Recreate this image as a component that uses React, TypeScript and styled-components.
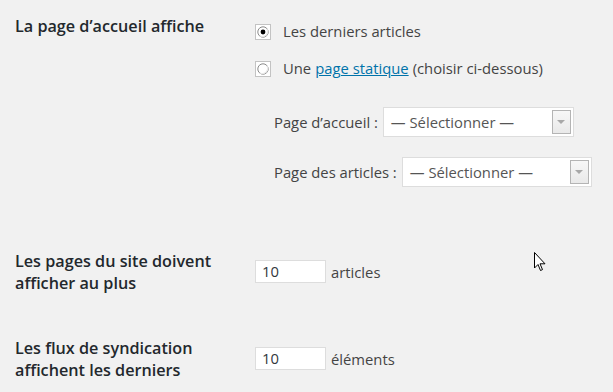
import React from "react";
import styled, { createGlobalStyle } from "styled-components";

const Global = createGlobalStyle`
  html, body { margin: 0; padding: 0; background: #f1f1f1; }
  body { font-family: "Open Sans", "Liberation Sans", sans-serif; font-size: 14.8px; color: #444; }
`;

const Page = styled.div`
  width: 613px;
  height: 392px;
  position: relative;
  overflow: hidden;
  padding-left: 15px;
  box-sizing: border-box;
`;

const Row = styled.div<{ $top: number }>`
  display: grid;
  grid-template-columns: 240px 1fr;
  padding-top: ${(p) => p.$top}px;
`;

const Label = styled.div<{ $lh: number }>`
  font-weight: 600;
  color: #23282d;
  font-size: 16.2px;
  line-height: ${(p) => p.$lh}px;
  width: 225px;
`;

const Controls = styled.div<{ $top: number }>`
  padding-top: ${(p) => p.$top}px;
  display: flex;
  flex-direction: column;
`;

const RadioLine = styled.label<{ $gap: number }>`
  display: flex;
  align-items: center;
  height: 21px;
  line-height: 21px;
  margin-bottom: ${(p) => p.$gap}px;
  white-space: nowrap;
`;

const RadioBox = styled.span`
  width: 14px;
  height: 14px;
  border: 1px solid #c3c3c3;
  background: #fff;
  display: inline-flex;
  align-items: center;
  justify-content: center;
  margin-right: 12px;
  flex: none;
`;

const Link = styled.a`
  color: #0073aa;
  text-decoration: underline;
  margin: 0 4px;
`;

const SelectList = styled.div`
  padding-left: 19px;
  display: flex;
  flex-direction: column;
  gap: 20px;
  margin-top: 28px;
`;

const SelectRow = styled.div`
  display: flex;
  align-items: center;
  white-space: nowrap;
`;

const SelectBox = styled.div<{ $w: number }>`
  width: ${(p) => p.$w}px;
  height: 30px;
  box-sizing: border-box;
  border: 1px solid #dddddd;
  background: #fff;
  margin-left: 5px;
  display: flex;
  align-items: center;
  justify-content: space-between;
  padding-left: 7px;
  padding-right: 2px;
  color: #555;
`;

const DropButton = styled.span`
  width: 19px;
  height: 24px;
  box-sizing: border-box;
  border: 1px solid #b4b4b4;
  background: linear-gradient(#f7f7f7, #e9e9e9);
  display: inline-flex;
  align-items: center;
  justify-content: center;
`;

const Arrow = styled.span`
  width: 0;
  height: 0;
  border-left: 4px solid transparent;
  border-right: 4px solid transparent;
  border-top: 4px solid #a8a8a8;
`;

const NumberLine = styled.div`
  display: flex;
  align-items: center;
  gap: 5px;
`;

const NumberInput = styled.div`
  width: 71px;
  height: 23px;
  box-sizing: border-box;
  border: 1px solid #dddddd;
  background: #fff;
  padding-left: 6px;
  line-height: 21px;
  color: #32373c;
`;

const Cursor = styled.svg`
  position: absolute;
  left: 534px;
  top: 252px;
`;

function Radio({ checked }: { checked?: boolean }) {
  return (
    <RadioBox>
      <svg width="12" height="12" viewBox="0 0 12 12">
        <circle cx="6" cy="6" r="5.2" fill="#fff" stroke="#8a8a8a" strokeWidth="1" />
        <path d="M10 3 A5.2 5.2 0 0 1 3 10" fill="none" stroke="#e8e8e8" strokeWidth="1.2" />
        {checked && <circle cx="6" cy="6" r="2.4" fill="#000" />}
      </svg>
    </RadioBox>
  );
}

function Select({ label, w }: { label: string; w: number }) {
  return (
    <SelectRow>
      {label}
      <SelectBox $w={w}>
        — Sélectionner —
        <DropButton>
          <Arrow />
        </DropButton>
      </SelectBox>
    </SelectRow>
  );
}

export default function App() {
  return (
    <Page>
      <Global />
      <Row $top={16}>
        <Label $lh={21}>La page d’accueil affiche</Label>
        <Controls $top={5}>
          <RadioLine $gap={16}>
            <Radio checked />
            Les derniers articles
          </RadioLine>
          <RadioLine $gap={0}>
            <Radio />
            Une<Link href="#">page statique</Link>(choisir ci-dessous)
          </RadioLine>
          <SelectList>
            <Select label="Page d’accueil :" w={191} />
            <Select label="Page des articles :" w={190} />
          </SelectList>
        </Controls>
      </Row>
      <Row $top={64}>
        <Label $lh={21.5}>Les pages du site doivent afficher au plus</Label>
        <Controls $top={9}>
          <NumberLine>
            <NumberInput>10</NumberInput>
            articles
          </NumberLine>
        </Controls>
      </Row>
      <Row $top={44}>
        <Label $lh={21.5}>Les flux de syndication affichent les derniers</Label>
        <Controls $top={9}>
          <NumberLine>
            <NumberInput>10</NumberInput>
            éléments
          </NumberLine>
        </Controls>
      </Row>
      <Cursor width="12" height="20" viewBox="0 0 12 20">
        <path d="M0.5 0.5 L0.5 16 L4 12.5 L6.5 18.5 L8.5 17.6 L6 11.8 L11 11.8 Z" fill="#fff" stroke="#000" strokeWidth="1" strokeLinejoin="miter" />
      </Cursor>
    </Page>
  );
}
